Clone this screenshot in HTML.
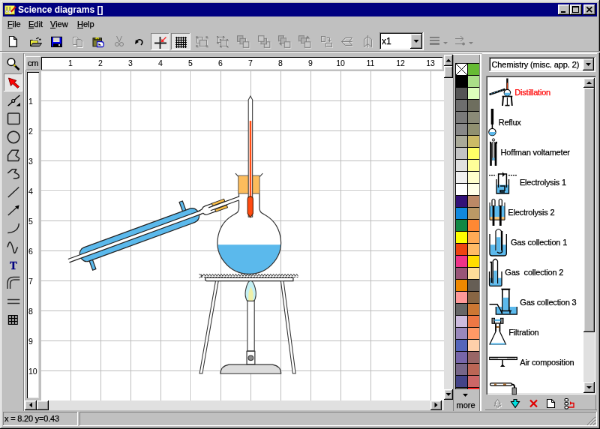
<!DOCTYPE html>
<html><head><meta charset="utf-8">
<style>
html,body{margin:0;padding:0;width:600px;height:429px;overflow:hidden;background:#c0c0c0;}
#w{will-change:transform;-webkit-font-smoothing:antialiased;position:absolute;left:0;top:0;width:800px;height:572px;transform:scale(0.75);transform-origin:0 0;background:#c0c0c0;
 font-family:"Liberation Sans",sans-serif;font-size:11px;color:#000;-webkit-text-stroke-width:0.25px;
 box-shadow:inset -1px -1px #000,inset 1px 1px #dfdfdf,inset -2px -2px #808080,inset 2px 2px #fff;}
.a{position:absolute;}
.rz{box-shadow:inset -1px -1px #000,inset 1px 1px #fff,inset -2px -2px #808080,inset 2px 2px #dfdfdf;background:#c0c0c0;}
.sk{box-shadow:inset -1px -1px #fff,inset 1px 1px #808080,inset -2px -2px #dfdfdf,inset 2px 2px #000;background:#fff;}
.th{box-shadow:inset -1px -1px #fff,inset 1px 1px #808080;}
.pr{box-shadow:inset -1px -1px #fff,inset 1px 1px #808080;background:#e6e6e6;}
.dith{background-color:#dfdfdf;}
svg{position:absolute;overflow:visible;}
</style></head>
<body>
<div id="w">
 <!-- title bar -->
 <div class="a" style="left:4px;top:4px;width:792px;height:18px;background:#000080;"></div>
 <div class="a" style="left:24px;top:5px;color:#fff;font-weight:bold;font-size:12px;line-height:16px;-webkit-text-stroke-width:0;">Science diagrams []</div>
 <div class="a rz" style="left:744px;top:6px;width:16px;height:14px;"></div>
 <div class="a rz" style="left:760px;top:6px;width:16px;height:14px;"></div>
 <div class="a rz" style="left:778px;top:6px;width:16px;height:14px;"></div>
 <!-- menu -->
 <div class="a" style="left:10px;top:26px;line-height:13px;"><u>F</u>ile</div>
 <div class="a" style="left:38px;top:26px;line-height:13px;"><u>E</u>dit</div>
 <div class="a" style="left:67px;top:26px;line-height:13px;"><u>V</u>iew</div>
 <div class="a" style="left:103px;top:26px;line-height:13px;"><u>H</u>elp</div>


 <div class="a pr" style="left:201px;top:44px;width:25px;height:23px;"></div>
 <div class="a pr" style="left:228px;top:44px;width:26px;height:23px;"></div>
 <!-- title icon -->
 <svg class="a" style="left:0;top:0" width="30" height="24">
  <rect x="6.5" y="7.5" width="13" height="12" fill="#fafa50"/>
  <path d="M6.5,19.3 H19.5" stroke="#202000" stroke-width="1"/>
  <path d="M9.2,9 V15.5 M13.2,9 V15.5" stroke="#707070" stroke-width="1.3"/>
  <circle cx="9.2" cy="15.2" r="1.5" fill="#f0f0f0" stroke="#808080" stroke-width="0.6"/>
  <circle cx="13.2" cy="15.2" r="1.5" fill="#f0f0f0" stroke="#808080" stroke-width="0.6"/>
  <path d="M21,9 L14.5,16" stroke="#d01010" stroke-width="2"/>
  <path d="M14.7,15.8 L12.7,18" stroke="#e8e8f0" stroke-width="2"/>
 </svg>
 <!-- title buttons glyphs -->
 <svg class="a" style="left:744px;top:6px" width="50" height="14">
  <rect x="4" y="9" width="6" height="2" fill="#000"/>
  <rect x="19.5" y="2.5" width="8" height="8" fill="none" stroke="#000"/>
  <rect x="19" y="2" width="9" height="2" fill="#000"/>
  <path d="M38.3,3.3 L45.2,10.2 M45.2,3.3 L38.3,10.2" stroke="#000" stroke-width="1.7"/>
 </svg>
 <!-- toolbar icons -->
 <svg class="a" style="left:0;top:0" width="800" height="80">
  <!-- new -->
  <g transform="translate(10,48)">
   <path d="M2.5,0.5 H8.5 L12.5,4.5 V14.5 H2.5 Z" fill="#fff" stroke="#111" stroke-width="1.1"/>
   <path d="M3,13.5 H12 M11.5,5 V13.5" stroke="#909090" stroke-width="1"/>
   <path d="M8.5,0.8 V4.5 H12.2 Z" fill="#808080" stroke="#111" stroke-width="1"/>
  </g>
  <!-- open -->
  <g transform="translate(40,47)">
   <path d="M0.5,14.5 V6.5 H3.5 L4.5,7.5 H10.5 V10.5" fill="#f0f040" stroke="#000" stroke-width="1"/>
   <rect x="1" y="7.5" width="9.3" height="7" fill="#f0f040"/>
   <path d="M1,14.6 L3.6,10.5 H15.5 L12.7,14.6 Z" fill="#808080" stroke="#000" stroke-width="1"/>
   <path d="M8.3,5 Q9.8,3 11.8,3.8" fill="none" stroke="#000" stroke-width="1.1"/>
   <circle cx="13.4" cy="5.6" r="1.2" fill="#000"/>
  </g>
  <!-- save -->
  <g transform="translate(67,47)">
   <rect x="1.5" y="2.3" width="14" height="13.2" fill="#0000f0" stroke="#000" stroke-width="1"/>
   <rect x="4" y="3.2" width="8.5" height="5.8" fill="#e4e4d8"/>
   <path d="M4.5,5 H12 M4.5,7 H12" stroke="#b0b0a8" stroke-width="0.5"/>
   <rect x="4" y="11.3" width="10.5" height="4" fill="#000"/>
   <rect x="11.2" y="12" width="1.6" height="2.2" fill="#fff"/>
  </g>
  <!-- copy disabled -->
  <g transform="translate(96,47)" fill="none">
   <path d="M1.5,2.5 H6.5 L8.5,4.5 V12.5 H1.5 Z" stroke="#fff" transform="translate(1,1)"/>
   <path d="M6.5,5.5 H11.5 L13.5,7.5 V15.5 H6.5 Z" stroke="#fff" transform="translate(1,1)"/>
   <path d="M1.5,2.5 H6.5 L8.5,4.5 V12.5 H1.5 Z" stroke="#808080"/>
   <path d="M6.5,5.5 H11.5 L13.5,7.5 V15.5 H6.5 Z" stroke="#808080" fill="#c0c0c0"/>
  </g>
  <!-- paste -->
  <g transform="translate(123,47)">
   <rect x="1" y="3.8" width="11.5" height="11" fill="#7c7c30" stroke="#111" stroke-width="1"/>
   <rect x="2" y="4.5" width="9.5" height="2.2" fill="#2a2a10"/>
   <rect x="4.5" y="3.2" width="1.4" height="2" fill="#f0f000"/>
   <rect x="7.3" y="3.2" width="1.4" height="2" fill="#f0f000"/>
   <rect x="6" y="2.8" width="1.2" height="1.2" fill="#f0f000"/>
   <path d="M6.5,8.5 H12 Q14.5,8.5 15.2,11 V14 Q15,15.5 13.5,15.5 H6.5 Z" fill="#fff" stroke="#1010c0" stroke-width="1.3"/>
   <path d="M8.3,10.8 V13.3 H12" stroke="#808080" stroke-width="0.7"/>
  </g>
  <!-- cut disabled -->
  <g transform="translate(151,47)" fill="none">
   <path d="M4.5,1 L8,9 M11.5,1 L8,9" stroke="#808080" stroke-width="1"/>
   <circle cx="5" cy="12" r="2.5" stroke="#808080"/>
   <circle cx="11" cy="12" r="2.5" stroke="#808080"/>
  </g>
  <!-- undo -->
  <g transform="translate(178,47)">
   <path d="M4,8 Q8,4 11,7 Q13,10 10,13" fill="none" stroke="#000" stroke-width="1.6"/>
   <path d="M2,12 L3,6 L7,9 Z" fill="#000"/>
  </g>
  <!-- cross toggle -->
  <g transform="translate(205,49)">
   <path d="M8.5,0 V16 M1,8.5 H17" stroke="#202020" stroke-width="1.8"/>
   <path d="M16.5,0.5 L12,5" stroke="#ff2020" stroke-width="1.3"/>
   <path d="M9.8,7.2 L10.6,2.8 L14.2,6.4 Z" fill="#ff2020"/>
  </g>
  <!-- grid toggle -->
  <g transform="translate(234,49)" stroke="#000" stroke-width="1.2">
   <path d="M1.5,0 V15 M4.5,0 V15 M7.5,0 V15 M10.5,0 V15 M13.5,0 V15 M0,1.5 H15 M0,4.5 H15 M0,7.5 H15 M0,10.5 H15 M0,13.5 H15"/>
  </g>
 </svg>

 <!-- disabled arrange icons -->
 <svg class="a" style="left:0;top:0" width="800" height="80" fill="none">
  
  <g stroke="#fff" transform="translate(1,1)" opacity="0.45">
   <g transform="translate(261,47)">
    <rect x="1.5" y="2.5" width="7.5" height="8"/>
    <rect x="5.5" y="6.5" width="9" height="8" fill="#c0c0c0"/>
    <rect x="0.2" y="1.3" width="2.4" height="2.4" fill="#808080" stroke="none"/>
    <rect x="13.4" y="1.3" width="2.4" height="2.4" fill="#808080" stroke="none"/>
    <rect x="0.2" y="13.2" width="2.4" height="2.4" fill="#808080" stroke="none"/>
    <rect x="13.4" y="13.2" width="2.4" height="2.4" fill="#808080" stroke="none"/>
   </g>
   <g transform="translate(288,47)">
    <rect x="2.5" y="2.5" width="7" height="7"/>
    <rect x="6.5" y="6.5" width="8" height="8" fill="#c0c0c0"/>
    <rect x="1" y="1" width="2" height="2" fill="#808080" stroke="none"/>
    <rect x="9" y="1" width="2" height="2" fill="#808080" stroke="none"/>
    <rect x="1" y="9" width="2" height="2" fill="#808080" stroke="none"/>
    <rect x="5" y="5" width="2" height="2" fill="#808080" stroke="none"/>
    <rect x="14" y="5" width="2" height="2" fill="#808080" stroke="none"/>
    <rect x="5" y="14" width="2" height="2" fill="#808080" stroke="none"/>
    <rect x="14" y="14" width="2" height="2" fill="#808080" stroke="none"/>
   </g>
   <g transform="translate(316,47)">
    <rect x="0.5" y="0.8" width="7.5" height="7.5" fill="#b0b0b0"/>
    <rect x="4" y="4.3" width="7.5" height="7.5" fill="#b0b0b0"/>
    <rect x="8.3" y="8.8" width="7.5" height="7.5" fill="#c8c8c8"/>
   </g>
   <g transform="translate(344,47)">
    <rect x="8.3" y="8.8" width="7.5" height="7.5" fill="#c8c8c8"/>
    <rect x="4" y="4.3" width="7.5" height="7.5" fill="#b0b0b0"/>
    <rect x="0.5" y="0.8" width="7.5" height="7.5" fill="#c8c8c8"/>
   </g>
   <g transform="translate(371,47)">
    <rect x="0.5" y="0.8" width="7" height="7" fill="#b0b0b0"/>
    <rect x="3.5" y="3.8" width="7" height="7" fill="#b0b0b0"/>
    <path d="M1,11 L4,8.5 V13.5 Z" fill="#808080" stroke="none"/>
    <rect x="8.3" y="8.8" width="7.5" height="7.5" fill="#c8c8c8"/>
   </g>
   <g transform="translate(398,47)">
    <rect x="0.5" y="0.8" width="7" height="7" fill="#b0b0b0"/>
    <rect x="3.5" y="3.8" width="7" height="7" fill="#b0b0b0"/>
    <path d="M12,0.5 L14.5,4 H9.5 Z" fill="#808080" stroke="none"/>
    <rect x="8.3" y="8.8" width="7.5" height="7.5" fill="#c8c8c8"/>
   </g>
   <g transform="translate(427,47)">
    <rect x="1.5" y="1.5" width="5" height="7"/>
    <rect x="7.5" y="10.5" width="8" height="5"/>
    <path d="M8.5,3.5 H12.5 V8.5 M10.5,6.5 L12.5,8.5 L14.5,6.5"/>
   </g>
   <g transform="translate(454,47)">
    <path d="M1.5,8.5 L6.5,3.5 H15.5 L11.5,8.5 Z M1.5,8.5 L6.5,13.5 H15.5 L11.5,8.5 M1.5,8.5 H15.5"/>
   </g>
   <g transform="translate(482,47)">
    <path d="M8.5,1.5 L3.5,5.5 V15.5 L8.5,11.5 Z M8.5,1.5 L13.5,5.5 V15.5 L8.5,11.5 M8.5,0 V16"/>
   </g>
  </g>
  <g stroke="#808080">
   <g transform="translate(261,47)">
    <rect x="1.5" y="2.5" width="7.5" height="8"/>
    <rect x="5.5" y="6.5" width="9" height="8" fill="#c0c0c0"/>
    <rect x="0.2" y="1.3" width="2.4" height="2.4" fill="#808080" stroke="none"/>
    <rect x="13.4" y="1.3" width="2.4" height="2.4" fill="#808080" stroke="none"/>
    <rect x="0.2" y="13.2" width="2.4" height="2.4" fill="#808080" stroke="none"/>
    <rect x="13.4" y="13.2" width="2.4" height="2.4" fill="#808080" stroke="none"/>
   </g>
   <g transform="translate(288,47)">
    <rect x="2.5" y="2.5" width="7" height="7"/>
    <rect x="6.5" y="6.5" width="8" height="8" fill="#c0c0c0"/>
    <rect x="1" y="1" width="2" height="2" fill="#808080" stroke="none"/>
    <rect x="9" y="1" width="2" height="2" fill="#808080" stroke="none"/>
    <rect x="1" y="9" width="2" height="2" fill="#808080" stroke="none"/>
    <rect x="5" y="5" width="2" height="2" fill="#808080" stroke="none"/>
    <rect x="14" y="5" width="2" height="2" fill="#808080" stroke="none"/>
    <rect x="5" y="14" width="2" height="2" fill="#808080" stroke="none"/>
    <rect x="14" y="14" width="2" height="2" fill="#808080" stroke="none"/>
   </g>
   <g transform="translate(316,47)">
    <rect x="0.5" y="0.8" width="7.5" height="7.5" fill="#b0b0b0"/>
    <rect x="4" y="4.3" width="7.5" height="7.5" fill="#b0b0b0"/>
    <rect x="8.3" y="8.8" width="7.5" height="7.5" fill="#c8c8c8"/>
   </g>
   <g transform="translate(344,47)">
    <rect x="8.3" y="8.8" width="7.5" height="7.5" fill="#c8c8c8"/>
    <rect x="4" y="4.3" width="7.5" height="7.5" fill="#b0b0b0"/>
    <rect x="0.5" y="0.8" width="7.5" height="7.5" fill="#c8c8c8"/>
   </g>
   <g transform="translate(371,47)">
    <rect x="0.5" y="0.8" width="7" height="7" fill="#b0b0b0"/>
    <rect x="3.5" y="3.8" width="7" height="7" fill="#b0b0b0"/>
    <path d="M1,11 L4,8.5 V13.5 Z" fill="#808080" stroke="none"/>
    <rect x="8.3" y="8.8" width="7.5" height="7.5" fill="#c8c8c8"/>
   </g>
   <g transform="translate(398,47)">
    <rect x="0.5" y="0.8" width="7" height="7" fill="#b0b0b0"/>
    <rect x="3.5" y="3.8" width="7" height="7" fill="#b0b0b0"/>
    <path d="M12,0.5 L14.5,4 H9.5 Z" fill="#808080" stroke="none"/>
    <rect x="8.3" y="8.8" width="7.5" height="7.5" fill="#c8c8c8"/>
   </g>
   <g transform="translate(427,47)">
    <rect x="1.5" y="1.5" width="5" height="7"/>
    <rect x="7.5" y="10.5" width="8" height="5"/>
    <path d="M8.5,3.5 H12.5 V8.5 M10.5,6.5 L12.5,8.5 L14.5,6.5"/>
   </g>
   <g transform="translate(454,47)">
    <path d="M1.5,8.5 L6.5,3.5 H15.5 L11.5,8.5 Z M1.5,8.5 L6.5,13.5 H15.5 L11.5,8.5 M1.5,8.5 H15.5"/>
   </g>
   <g transform="translate(482,47)">
    <path d="M8.5,1.5 L3.5,5.5 V15.5 L8.5,11.5 Z M8.5,1.5 L13.5,5.5 V15.5 L8.5,11.5 M8.5,0 V16"/>
   </g>
  </g>
  <!-- line style icon -->
  <g fill="#808080">
   <rect x="573" y="49" width="13" height="2"/>
   <rect x="573" y="53" width="13" height="2"/>
   <rect x="573" y="57" width="13" height="3"/>
   <path d="M591,56 H597 L594,59 Z"/>
   <path d="M625,56 H631 L628,59 Z"/>
  </g>
  <g stroke="#808080">
   <path d="M607,51.5 H617 M607,58.5 H617 M614,48 L618,51.5 L614,55"/>
   <circle cx="618" cy="58.5" r="1.5" fill="#808080"/>
  </g>
 </svg>
 <!-- combo x1 -->
 <div class="a sk" style="left:506px;top:43px;width:59px;height:24px;"></div>
 <div class="a" style="left:509px;top:48px;font-size:12px;line-height:14px;">x1</div>
 <div class="a rz" style="left:547px;top:45px;width:16px;height:20px;"></div>
 <svg class="a" style="left:547px;top:45px" width="16" height="20"><path d="M4.5,8 H11.5 L8,12 Z" fill="#000"/></svg>
 <!-- toolbar separator -->
 <div class="a" style="left:0;top:68px;width:800px;height:1px;background:#808080;"></div>
 <div class="a" style="left:0;top:69px;width:800px;height:1px;background:#fff;"></div>

<div class="a" style="left:31px;top:71px;width:1px;height:477px;background:#808080;"></div>
<div class="a" style="left:32px;top:72px;width:1px;height:476px;background:#fff;"></div>

<div class="a" style="left:604px;top:72px;width:1px;height:476px;background:#808080;"></div>
<div class="a" style="left:34px;top:75px;width:20px;height:18px;background:#c0c0c0;box-shadow:inset 1px 1px #fff,inset -1px -1px #a0a0a0;"></div>
<div class="a" style="left:34.5px;top:77px;width:19px;text-align:center;font-size:11.5px;line-height:14px;letter-spacing:-0.3px;-webkit-text-stroke:0.2px #000;">cm</div>
<div class="a" style="left:55px;top:76px;width:535px;height:17px;background:#fff;box-shadow:inset 1px 1px #000,inset -1px -1px #dfdfdf;"></div>
<div class="a" style="left:55px;top:95px;width:537px;height:439px;background:#fff;overflow:hidden;" id="cv"></div>
<div class="a" style="left:36px;top:96px;width:16px;height:435px;background:#fff;box-shadow:inset 1px 1px #000,inset -1px -1px #dfdfdf;"></div>
<div class="a" style="left:94px;top:95px;width:1px;height:439px;background:#bcbcbc;"></div>
<div class="a" style="left:134px;top:95px;width:1px;height:439px;background:#bcbcbc;"></div>
<div class="a" style="left:174px;top:95px;width:1px;height:439px;background:#bcbcbc;"></div>
<div class="a" style="left:214px;top:95px;width:1px;height:439px;background:#bcbcbc;"></div>
<div class="a" style="left:254px;top:95px;width:1px;height:439px;background:#bcbcbc;"></div>
<div class="a" style="left:294px;top:95px;width:1px;height:439px;background:#bcbcbc;"></div>
<div class="a" style="left:334px;top:95px;width:1px;height:439px;background:#bcbcbc;"></div>
<div class="a" style="left:374px;top:95px;width:1px;height:439px;background:#bcbcbc;"></div>
<div class="a" style="left:414px;top:95px;width:1px;height:439px;background:#bcbcbc;"></div>
<div class="a" style="left:454px;top:95px;width:1px;height:439px;background:#bcbcbc;"></div>
<div class="a" style="left:494px;top:95px;width:1px;height:439px;background:#bcbcbc;"></div>
<div class="a" style="left:534px;top:95px;width:1px;height:439px;background:#bcbcbc;"></div>
<div class="a" style="left:574px;top:95px;width:1px;height:439px;background:#bcbcbc;"></div>
<div class="a" style="left:55px;top:134px;width:537px;height:1px;background:#bcbcbc;"></div>
<div class="a" style="left:55px;top:174px;width:537px;height:1px;background:#bcbcbc;"></div>
<div class="a" style="left:55px;top:214px;width:537px;height:1px;background:#bcbcbc;"></div>
<div class="a" style="left:55px;top:254px;width:537px;height:1px;background:#bcbcbc;"></div>
<div class="a" style="left:55px;top:294px;width:537px;height:1px;background:#bcbcbc;"></div>
<div class="a" style="left:55px;top:334px;width:537px;height:1px;background:#bcbcbc;"></div>
<div class="a" style="left:55px;top:374px;width:537px;height:1px;background:#bcbcbc;"></div>
<div class="a" style="left:55px;top:414px;width:537px;height:1px;background:#bcbcbc;"></div>
<div class="a" style="left:55px;top:454px;width:537px;height:1px;background:#bcbcbc;"></div>
<div class="a" style="left:55px;top:494px;width:537px;height:1px;background:#bcbcbc;"></div>
<div class="a" style="left:79px;top:77.5px;width:30px;text-align:center;font-size:10.5px;-webkit-text-stroke:0.05px #000;line-height:13px;">1</div>
<div class="a" style="left:119px;top:77.5px;width:30px;text-align:center;font-size:10.5px;-webkit-text-stroke:0.05px #000;line-height:13px;">2</div>
<div class="a" style="left:159px;top:77.5px;width:30px;text-align:center;font-size:10.5px;-webkit-text-stroke:0.05px #000;line-height:13px;">3</div>
<div class="a" style="left:199px;top:77.5px;width:30px;text-align:center;font-size:10.5px;-webkit-text-stroke:0.05px #000;line-height:13px;">4</div>
<div class="a" style="left:239px;top:77.5px;width:30px;text-align:center;font-size:10.5px;-webkit-text-stroke:0.05px #000;line-height:13px;">5</div>
<div class="a" style="left:279px;top:77.5px;width:30px;text-align:center;font-size:10.5px;-webkit-text-stroke:0.05px #000;line-height:13px;">6</div>
<div class="a" style="left:319px;top:77.5px;width:30px;text-align:center;font-size:10.5px;-webkit-text-stroke:0.05px #000;line-height:13px;">7</div>
<div class="a" style="left:359px;top:77.5px;width:30px;text-align:center;font-size:10.5px;-webkit-text-stroke:0.05px #000;line-height:13px;">8</div>
<div class="a" style="left:399px;top:77.5px;width:30px;text-align:center;font-size:10.5px;-webkit-text-stroke:0.05px #000;line-height:13px;">9</div>
<div class="a" style="left:439px;top:77.5px;width:30px;text-align:center;font-size:10.5px;-webkit-text-stroke:0.05px #000;line-height:13px;">10</div>
<div class="a" style="left:479px;top:77.5px;width:30px;text-align:center;font-size:10.5px;-webkit-text-stroke:0.05px #000;line-height:13px;">11</div>
<div class="a" style="left:519px;top:77.5px;width:30px;text-align:center;font-size:10.5px;-webkit-text-stroke:0.05px #000;line-height:13px;">12</div>
<div class="a" style="left:559px;top:77.5px;width:30px;text-align:center;font-size:10.5px;-webkit-text-stroke:0.05px #000;line-height:13px;">13</div>
<div class="a" style="left:38px;top:128.5px;font-size:10.5px;-webkit-text-stroke:0.05px #000;line-height:13px;">1</div>
<div class="a" style="left:38px;top:168.5px;font-size:10.5px;-webkit-text-stroke:0.05px #000;line-height:13px;">2</div>
<div class="a" style="left:38px;top:208.5px;font-size:10.5px;-webkit-text-stroke:0.05px #000;line-height:13px;">3</div>
<div class="a" style="left:38px;top:248.5px;font-size:10.5px;-webkit-text-stroke:0.05px #000;line-height:13px;">4</div>
<div class="a" style="left:38px;top:288.5px;font-size:10.5px;-webkit-text-stroke:0.05px #000;line-height:13px;">5</div>
<div class="a" style="left:38px;top:328.5px;font-size:10.5px;-webkit-text-stroke:0.05px #000;line-height:13px;">6</div>
<div class="a" style="left:38px;top:368.5px;font-size:10.5px;-webkit-text-stroke:0.05px #000;line-height:13px;">7</div>
<div class="a" style="left:38px;top:408.5px;font-size:10.5px;-webkit-text-stroke:0.05px #000;line-height:13px;">8</div>
<div class="a" style="left:38px;top:448.5px;font-size:10.5px;-webkit-text-stroke:0.05px #000;line-height:13px;">9</div>
<div class="a" style="left:38px;top:488.5px;font-size:10.5px;-webkit-text-stroke:0.05px #000;line-height:13px;">10</div>
<div class="a" style="left:592px;top:73px;width:12px;height:474px;background:#e0e0e0;"></div>
<div class="a rz" style="left:592px;top:73px;width:12px;height:15px;"></div>
<svg class="a" style="left:592px;top:73px" width="12" height="15"><path d="M2.5,9.5 H9.5 L6,5.5 Z" fill="#000"/></svg>
<div class="a rz" style="left:592px;top:88px;width:12px;height:16px;"></div>
<div class="a rz" style="left:592px;top:519px;width:12px;height:14px;"></div>
<svg class="a" style="left:592px;top:519px" width="12" height="14"><path d="M2.5,5 H9.5 L6,9 Z" fill="#000"/></svg>
<div class="a" style="left:592px;top:533px;width:12px;height:14px;background:#c0c0c0;"></div>
<div class="a" style="left:33px;top:534px;width:559px;height:13px;background:#e0e0e0;"></div>
<div class="a rz" style="left:33px;top:534px;width:16px;height:13px;"></div>
<svg class="a" style="left:33px;top:534px" width="16" height="13"><path d="M10,2.5 V9.5 L6,6 Z" fill="#000"/></svg>
<div class="a rz" style="left:49px;top:534px;width:16px;height:13px;"></div>
<div class="a rz" style="left:574px;top:534px;width:15px;height:13px;"></div>
<svg class="a" style="left:574px;top:534px" width="15" height="13"><path d="M5.5,2.5 V9.5 L9.5,6 Z" fill="#000"/></svg>

<div class="a" style="left:607px;top:84px;width:33px;height:435px;overflow:hidden;">
<div class="a" style="left:0;top:0px;width:16px;height:16px;background:#ffffff;box-shadow:inset 1px 1px #000;"></div>
<div class="a" style="left:16px;top:0px;width:17px;height:16px;background:#66bb33;box-shadow:inset 1px 1px #000,inset -1px 0 #000;"></div>
<div class="a" style="left:0;top:16px;width:16px;height:16px;background:#000000;box-shadow:inset 1px 1px #000;"></div>
<div class="a" style="left:16px;top:16px;width:17px;height:16px;background:#aade88;box-shadow:inset 1px 1px #000,inset -1px 0 #000;"></div>
<div class="a" style="left:0;top:32px;width:16px;height:16px;background:#555555;box-shadow:inset 1px 1px #000;"></div>
<div class="a" style="left:16px;top:32px;width:17px;height:16px;background:#ddffbb;box-shadow:inset 1px 1px #000,inset -1px 0 #000;"></div>
<div class="a" style="left:0;top:48px;width:16px;height:16px;background:#6e6e6e;box-shadow:inset 1px 1px #000;"></div>
<div class="a" style="left:16px;top:48px;width:17px;height:16px;background:#6e6e5e;box-shadow:inset 1px 1px #000,inset -1px 0 #000;"></div>
<div class="a" style="left:0;top:64px;width:16px;height:16px;background:#7a7a7a;box-shadow:inset 1px 1px #000;"></div>
<div class="a" style="left:16px;top:64px;width:17px;height:16px;background:#8a8a77;box-shadow:inset 1px 1px #000,inset -1px 0 #000;"></div>
<div class="a" style="left:0;top:80px;width:16px;height:16px;background:#888888;box-shadow:inset 1px 1px #000;"></div>
<div class="a" style="left:16px;top:80px;width:17px;height:16px;background:#909070;box-shadow:inset 1px 1px #000,inset -1px 0 #000;"></div>
<div class="a" style="left:0;top:96px;width:16px;height:16px;background:#aaaa99;box-shadow:inset 1px 1px #000;"></div>
<div class="a" style="left:16px;top:96px;width:17px;height:16px;background:#ccbb66;box-shadow:inset 1px 1px #000,inset -1px 0 #000;"></div>
<div class="a" style="left:0;top:112px;width:16px;height:16px;background:#c4c4c4;box-shadow:inset 1px 1px #000;"></div>
<div class="a" style="left:16px;top:112px;width:17px;height:16px;background:#ffff66;box-shadow:inset 1px 1px #000,inset -1px 0 #000;"></div>
<div class="a" style="left:0;top:128px;width:16px;height:16px;background:#e0e0e0;box-shadow:inset 1px 1px #000;"></div>
<div class="a" style="left:16px;top:128px;width:17px;height:16px;background:#ffff99;box-shadow:inset 1px 1px #000,inset -1px 0 #000;"></div>
<div class="a" style="left:0;top:144px;width:16px;height:16px;background:#f0f0f0;box-shadow:inset 1px 1px #000;"></div>
<div class="a" style="left:16px;top:144px;width:17px;height:16px;background:#ffffcc;box-shadow:inset 1px 1px #000,inset -1px 0 #000;"></div>
<div class="a" style="left:0;top:160px;width:16px;height:16px;background:#ffffff;box-shadow:inset 1px 1px #000;"></div>
<div class="a" style="left:16px;top:160px;width:17px;height:16px;background:#ffffe8;box-shadow:inset 1px 1px #000,inset -1px 0 #000;"></div>
<div class="a" style="left:0;top:176px;width:16px;height:16px;background:#331177;box-shadow:inset 1px 1px #000;"></div>
<div class="a" style="left:16px;top:176px;width:17px;height:16px;background:#bb8866;box-shadow:inset 1px 1px #000,inset -1px 0 #000;"></div>
<div class="a" style="left:0;top:192px;width:16px;height:16px;background:#1188dd;box-shadow:inset 1px 1px #000;"></div>
<div class="a" style="left:16px;top:192px;width:17px;height:16px;background:#bb9966;box-shadow:inset 1px 1px #000,inset -1px 0 #000;"></div>
<div class="a" style="left:0;top:208px;width:16px;height:16px;background:#118844;box-shadow:inset 1px 1px #000;"></div>
<div class="a" style="left:16px;top:208px;width:17px;height:16px;background:#ff8833;box-shadow:inset 1px 1px #000,inset -1px 0 #000;"></div>
<div class="a" style="left:0;top:224px;width:16px;height:16px;background:#ffff00;box-shadow:inset 1px 1px #000;"></div>
<div class="a" style="left:16px;top:224px;width:17px;height:16px;background:#ffaa55;box-shadow:inset 1px 1px #000,inset -1px 0 #000;"></div>
<div class="a" style="left:0;top:240px;width:16px;height:16px;background:#ee4411;box-shadow:inset 1px 1px #000;"></div>
<div class="a" style="left:16px;top:240px;width:17px;height:16px;background:#ffbb66;box-shadow:inset 1px 1px #000,inset -1px 0 #000;"></div>
<div class="a" style="left:0;top:256px;width:16px;height:16px;background:#ee3388;box-shadow:inset 1px 1px #000;"></div>
<div class="a" style="left:16px;top:256px;width:17px;height:16px;background:#ffdd00;box-shadow:inset 1px 1px #000,inset -1px 0 #000;"></div>
<div class="a" style="left:0;top:272px;width:16px;height:16px;background:#995577;box-shadow:inset 1px 1px #000;"></div>
<div class="a" style="left:16px;top:272px;width:17px;height:16px;background:#ffdd99;box-shadow:inset 1px 1px #000,inset -1px 0 #000;"></div>
<div class="a" style="left:0;top:288px;width:16px;height:16px;background:#ee8800;box-shadow:inset 1px 1px #000;"></div>
<div class="a" style="left:16px;top:288px;width:17px;height:16px;background:#665e55;box-shadow:inset 1px 1px #000,inset -1px 0 #000;"></div>
<div class="a" style="left:0;top:304px;width:16px;height:16px;background:#ff9999;box-shadow:inset 1px 1px #000;"></div>
<div class="a" style="left:16px;top:304px;width:17px;height:16px;background:#886644;box-shadow:inset 1px 1px #000,inset -1px 0 #000;"></div>
<div class="a" style="left:0;top:320px;width:16px;height:16px;background:#666666;box-shadow:inset 1px 1px #000;"></div>
<div class="a" style="left:16px;top:320px;width:17px;height:16px;background:#cc7733;box-shadow:inset 1px 1px #000,inset -1px 0 #000;"></div>
<div class="a" style="left:0;top:336px;width:16px;height:16px;background:#ccbbdd;box-shadow:inset 1px 1px #000;"></div>
<div class="a" style="left:16px;top:336px;width:17px;height:16px;background:#ee7744;box-shadow:inset 1px 1px #000,inset -1px 0 #000;"></div>
<div class="a" style="left:0;top:352px;width:16px;height:16px;background:#9988bb;box-shadow:inset 1px 1px #000;"></div>
<div class="a" style="left:16px;top:352px;width:17px;height:16px;background:#ff9966;box-shadow:inset 1px 1px #000,inset -1px 0 #000;"></div>
<div class="a" style="left:0;top:368px;width:16px;height:16px;background:#5566bb;box-shadow:inset 1px 1px #000;"></div>
<div class="a" style="left:16px;top:368px;width:17px;height:16px;background:#ffd0aa;box-shadow:inset 1px 1px #000,inset -1px 0 #000;"></div>
<div class="a" style="left:0;top:384px;width:16px;height:16px;background:#7766aa;box-shadow:inset 1px 1px #000;"></div>
<div class="a" style="left:16px;top:384px;width:17px;height:16px;background:#996666;box-shadow:inset 1px 1px #000,inset -1px 0 #000;"></div>
<div class="a" style="left:0;top:400px;width:16px;height:16px;background:#776688;box-shadow:inset 1px 1px #000;"></div>
<div class="a" style="left:16px;top:400px;width:17px;height:16px;background:#bb6655;box-shadow:inset 1px 1px #000,inset -1px 0 #000;"></div>
<div class="a" style="left:0;top:416px;width:16px;height:16px;background:#444488;box-shadow:inset 1px 1px #000;"></div>
<div class="a" style="left:16px;top:416px;width:17px;height:16px;background:#cc6666;box-shadow:inset 1px 1px #000,inset -1px 0 #000;"></div>
<div class="a" style="left:0;top:432px;width:16px;height:16px;background:#555555;box-shadow:inset 1px 1px #000;"></div>
<div class="a" style="left:16px;top:432px;width:17px;height:16px;background:#ff2222;box-shadow:inset 1px 1px #000,inset -1px 0 #000;"></div>
</div>
<svg class="a" style="left:607px;top:84px" width="16" height="16"><path d="M1,1 L16,16 M16,1 L1,16" stroke="#000" stroke-width="1"/></svg>
<svg class="a" style="left:616px;top:524px" width="10" height="6"><path d="M1,1 H8 L4.5,5 Z" fill="#000"/></svg>
<div class="a" style="left:603px;top:534px;width:36px;text-align:center;font-size:11px;line-height:13px;">more</div>
<div class="a" style="left:639px;top:72px;width:1px;height:476px;background:#808080;"></div>
<div class="a" style="left:640px;top:72px;width:2px;height:476px;background:#fff;"></div>


<div class="a" style="left:643px;top:71px;width:153px;height:1px;background:#fff;"></div>
<div class="a" style="left:604px;top:72px;width:36px;height:1px;background:#fff;"></div>
<div class="a sk" style="left:652px;top:76px;width:142px;height:20px;"></div>
<div class="a" style="left:655.5px;top:80px;font-size:11px;line-height:13px;white-space:nowrap;letter-spacing:-0.1px;">Chemistry (misc. app. 2)</div>
<div class="a rz" style="left:777px;top:78px;width:15px;height:16px;"></div>
<svg class="a" style="left:777px;top:78px" width="15" height="16"><path d="M4,6 H11 L7.5,10 Z" fill="#000"/></svg>
<div class="a" style="left:648px;top:101px;width:146px;height:425px;background:#fff;box-shadow:inset 1px 1px #808080,inset 2px 2px #404040,inset -1px -1px #fff,inset -2px -2px #dfdfdf;"></div>
<div class="a" style="left:778px;top:104px;width:15px;height:420px;background:#e0e0e0;"></div>
<div class="a rz" style="left:778px;top:104px;width:15px;height:13px;"></div>
<svg class="a" style="left:778px;top:104px" width="15" height="13"><path d="M4,8 H11 L7.5,4.5 Z" fill="#000"/></svg>
<div class="a rz" style="left:778px;top:117px;width:15px;height:326px;"></div>
<div class="a rz" style="left:778px;top:509px;width:15px;height:15px;"></div>
<svg class="a" style="left:778px;top:509px" width="15" height="15"><path d="M4,6 H11 L7.5,9.5 Z" fill="#000"/></svg>
<div class="a" style="left:686.3px;top:116.7px;font-size:11px;line-height:13px;white-space:nowrap;letter-spacing:-0.2px;color:#ff0000;">Distillation</div>
<div class="a" style="left:664.7px;top:156.7px;font-size:11px;line-height:13px;white-space:nowrap;letter-spacing:-0.2px;color:#000;">Reflux</div>
<div class="a" style="left:667.6px;top:196.7px;font-size:11px;line-height:13px;white-space:nowrap;letter-spacing:-0.2px;color:#000;">Hoffman voltameter</div>
<div class="a" style="left:692.9px;top:236.7px;font-size:11px;line-height:13px;white-space:nowrap;letter-spacing:-0.2px;color:#000;">Electrolysis 1</div>
<div class="a" style="left:677.3px;top:276.7px;font-size:11px;line-height:13px;white-space:nowrap;letter-spacing:-0.2px;color:#000;">Electrolysis 2</div>
<div class="a" style="left:681px;top:316.7px;font-size:11px;line-height:13px;white-space:nowrap;letter-spacing:-0.2px;color:#000;">Gas collection 1</div>
<div class="a" style="left:673.3px;top:356.7px;font-size:11px;line-height:13px;white-space:nowrap;letter-spacing:-0.2px;color:#000;">Gas&nbsp;&nbsp;collection 2</div>
<div class="a" style="left:693.3px;top:396.7px;font-size:11px;line-height:13px;white-space:nowrap;letter-spacing:-0.2px;color:#000;">Gas collection 3</div>
<div class="a" style="left:678.3px;top:436.7px;font-size:11px;line-height:13px;white-space:nowrap;letter-spacing:-0.2px;color:#000;">Filtration</div>
<div class="a" style="left:693.3px;top:476.7px;font-size:11px;line-height:13px;white-space:nowrap;letter-spacing:-0.2px;color:#000;">Air composition</div>
<svg class="a" style="left:0;top:0" width="800" height="526" fill="none" stroke="#000">
 <!-- distillation -->
 <path d="M676.4,104.5 V119" stroke="#000" stroke-width="2.4"/>
 <path d="M676.4,110.5 V119" stroke="#e04010" stroke-width="1.1"/>
 <path d="M652.5,126 L673.5,119" stroke="#000" stroke-width="2.6"/>
 <path d="M654.5,125.2 L671,119.8" stroke="#5bb9ec" stroke-width="0.9" stroke-dasharray="2,2"/>
 <circle cx="676.4" cy="123.6" r="4.2" fill="#fff" stroke-width="1.2"/>
 <path d="M672.3,123.8 A4.1,4.1 0 0 0 680.5,123.8 Z" fill="#5bb9ec" stroke="none"/>
 <path d="M669.5,128.5 H683.3" stroke-width="1.6"/>
 <path d="M671,129 L670,141 M681.8,129 L682.8,141" stroke-width="1.9"/>
 <path d="M676.4,130 V140" stroke-width="1.1"/>
 <path d="M673.5,140.6 H679.5" stroke-width="1.6"/>
 <!-- reflux -->
 <path d="M656.4,145 V166" stroke-width="3.4"/>
 <path d="M656.4,166 V171" stroke-width="1.5"/>
 <circle cx="656.4" cy="176" r="4.6" fill="#fff" stroke-width="1.3"/>
 <path d="M651.9,176 A4.5,4.5 0 0 0 660.9,176 Z" fill="#5bb9ec" stroke="none"/>
 <!-- hoffman -->
 <path d="M653,190 Q654.5,190 654.5,192 V221 M663,190 Q661,190 661,192 V221" stroke-width="2.6"/>
 <path d="M656.8,189 V214 M659.2,189 V214" stroke-width="1"/>
 <circle cx="658" cy="186.5" r="1.6" stroke-width="1"/>
 <path d="M656.5,212 H659.5" stroke="#5bb9ec" stroke-width="3"/>
 <!-- electrolysis 1 -->
 <path d="M652,233.7 H661.3 M677.9,233.7 H689.7" stroke-width="1.2" stroke-dasharray="2,1"/>
 <rect x="662.2" y="246.5" width="16" height="11.5" fill="#5bb9ec" stroke="none"/>
 <path d="M662,239 V258 H678.5 V239" stroke-width="1.3"/>
 <path d="M664.6,250 V232 H675.4 V250" stroke-width="1.5"/>
 <path d="M670,229 L673,233 L670,236 Z" fill="#000" stroke="none"/>
 <path d="M667,248 H673 V254 H667 V256 H673" stroke-width="1.5"/>
 <!-- electrolysis 2 -->
 <rect x="653" y="274.7" width="20" height="14.6" fill="#5bb9ec" stroke="none"/>
 <rect x="653" y="289.3" width="20" height="4" fill="#f8c070" stroke="none"/>
 <path d="M653,270 V293.2 H673 V270" stroke-width="1"/>
 <path d="M656,275 V267 Q658,264 660,267 V275 M665.3,275 V267 Q667.3,264 669.3,267 V275" fill="#fff" stroke-width="1.2"/>
 <path d="M658,274 V301 M667.3,274 V301" stroke-width="2.8"/>
 <!-- gas collection 1 -->
 <rect x="653.5" y="326.3" width="21.5" height="14.5" fill="#5bb9ec" stroke="none"/>
 <path d="M653,312 V338 Q653,341 656,341 H672 Q675.3,341 675.3,338 V312" stroke-width="1.3"/>
 <path d="M661,334 V308 Q664.7,303 668.4,308 V334" fill="#fff" stroke-width="1.2"/>
 <rect x="662" y="316.3" width="5.5" height="18" fill="#5bb9ec" stroke="none"/>
 <path d="M669.5,308 V336 Q666,339 663,336" stroke-width="1.5"/>
 <!-- gas collection 2 -->
 <rect x="653" y="370.7" width="16" height="10.5" fill="#5bb9ec" stroke="none"/>
 <path d="M652.5,362 V380 Q652.5,381.3 654,381.3 H667.5 Q669,381.3 669,380 V362" stroke-width="1.3"/>
 <path d="M657.3,378 V348 Q660.4,343 663.5,348 V378" fill="#fff" stroke-width="1.3"/>
 <rect x="658.3" y="360.8" width="4.4" height="17" fill="#5bb9ec" stroke="none"/>
 <path d="M653.3,349.7 H655.5 V377" stroke-width="1.8"/>
 <!-- gas collection 3 -->
 <rect x="661.5" y="409" width="27.5" height="10" fill="#5bb9ec" stroke="none"/>
 <path d="M661.3,409 V419.2 H689.3 V409" stroke-width="1.3"/>
 <path d="M669.8,414 V386 H678.8 V414" fill="#fff" stroke-width="1.6"/>
 <rect x="670.5" y="396.8" width="7.5" height="17" fill="#5bb9ec" stroke="none"/>
 <path d="M668.3,385.5 H680.3" stroke-width="1.6"/>
 <path d="M667,414.5 H682 M669,414.5 V418 M680,414.5 V418" stroke-width="1.5"/>
 <path d="M652.5,405.7 H663 L670,418" stroke-width="1.5"/>
 <!-- filtration -->
 <rect x="656" y="424.3" width="3.5" height="7" fill="#808080" stroke="#000" stroke-width="1"/>
 <rect x="667.5" y="424.3" width="3.5" height="7" fill="#808080" stroke="#000" stroke-width="1"/>
 <path d="M659.5,427 H667.5" stroke="#5bb9ec" stroke-width="2.5"/>
 <path d="M659.5,431 H667.5" stroke-width="1.3"/>
 <path d="M661,431.5 V442.3 M666.4,431.5 V442.3" stroke-width="1.8"/>
 <path d="M662,436 H665.5" stroke="#a06020" stroke-width="2"/>
 <path d="M661,442.3 L653,459 H674.4 L666.4,442.3" stroke-width="1.2"/>
 <path d="M654,458.5 H673.5" stroke="#5bb9ec" stroke-width="2"/>
 <!-- air composition -->
 <rect x="652.8" y="476.4" width="36.5" height="3" fill="#fff" stroke-width="1.3"/>
 <path d="M655,477.9 H664 M676,477.9 H687" stroke="#808080" stroke-width="1"/>
 <path d="M670,479.5 V486" stroke-width="1.5"/>
 <path d="M667,489 L670,485.5 L673.5,489 Z" fill="#000" stroke="none"/>
 <!-- partial -->
 <rect x="653.5" y="510.8" width="29" height="3.6" rx="1.8" fill="#fff" stroke-width="1.3"/>
 <path d="M659,512.6 H662 M671,512.6 H675" stroke="#a06020" stroke-width="2"/>
 <path d="M682,512.6 Q686,512.6 686,516 V520" stroke-width="2"/>
 <rect x="683" y="517" width="5.5" height="9" fill="#909090" stroke="#000" stroke-width="0.8"/>
</svg>


<!-- canvas drawing -->
<svg class="a" style="left:0;top:0;" width="800" height="572" fill="none">
 <g transform="scale(1.33333)">
  <g transform="translate(68.75,260.8) rotate(-20.153)" stroke="#222" stroke-width="0.9">
   <rect x="124" y="-17" width="3.4" height="11" fill="#5bb9ec"/>
   <rect x="19.3" y="6" width="3.4" height="11" fill="#5bb9ec"/>
   <rect x="12.4" y="-7.3" width="125.8" height="14.6" rx="6.5" fill="#5bb9ec"/>
   <rect x="0" y="-1.75" width="143.5" height="3.5" fill="#fff" stroke="none"/>
   <path d="M0,-1.75 H141 M0,1.75 H141"/>
   <path d="M137.7,-1.9 Q141.5,-2 143,-2.6 Q144.5,-4.6 146.5,-4.4 H154.5 M137.7,1.9 Q141.5,1.8 142.5,1.6 Q143.8,4.3 146,4.3 H155" fill="#fff"/>
   <rect x="154" y="-4.6" width="13" height="2.6" fill="#f8bc45" stroke-width="0.7"/>
   <rect x="155" y="2.1" width="12.5" height="2.6" fill="#f8bc45" stroke-width="0.7"/>
   <rect x="148" y="-1.7" width="33.5" height="3.4" fill="#fff" stroke="none"/>
   <path d="M149.5,-1.7 H181.5 M150.5,1.7 H181.5"/>
  </g>
  <path d="M238.9,200.4 V208 Q238.9,212.56 234.81,214.06 A31.7,31.7 0 1 0 263.59,214.06 Q259.5,212.56 259.5,208 V193.6 H238.9 Z" fill="#fff" stroke="none"/>
  <path d="M217.59,244.7 H280.81 A31.7,31.7 0 0 1 217.59,244.7 Z" fill="#5bb9ec" stroke="none"/>
  <path d="M238.9,193.6 V197.2 M238.9,200.4 V208 Q238.9,212.56 234.81,214.06 A31.7,31.7 0 1 0 263.59,214.06 Q259.5,212.56 259.5,208 V193.6" stroke="#333" stroke-width="0.9"/>
  <path d="M235.5,173.3 L238.6,177 M262.7,173.3 L259.6,177" stroke="#333" stroke-width="0.8"/>
  <rect x="238.3" y="175.6" width="21.3" height="18" fill="#fcbc5c" stroke="#555" stroke-width="0.7"/>
  <path d="M248.4,217 V99.8 L250.45,96.1 L252.5,99.8 V217 Z" fill="#fff" stroke="#383838" stroke-width="0.8"/>
  <rect x="249.55" y="120.8" width="1.9" height="80" fill="#ff4a10"/>
  <path d="M247.6,199.5 Q247.6,196.6 250.3,196.6 Q253,196.6 253,199.5 V213.5 L250.3,217.4 L247.6,213.5 Z" fill="#ff4a10" stroke="#5a2000" stroke-width="0.8"/>
      <path d="M201,274 L202.45,276.2 L203.90,274 L205.35,276.2 L206.80,274 L208.25,276.2 L209.70,274 L211.15,276.2 L212.60,274 L214.05,276.2 L215.50,274 L216.95,276.2 L218.40,274 L219.85,276.2 L221.30,274 L222.75,276.2 L224.20,274 L225.65,276.2 L227.10,274 L228.55,276.2 L230.00,274 L231.45,276.2 L232.90,274 L234.35,276.2 L235.80,274 L237.25,276.2 L238.70,274 L240.15,276.2 L241.60,274 L243.05,276.2 L244.50,274 L245.95,276.2 L247.40,274 L248.85,276.2 L250.30,274 L251.75,276.2 L253.20,274 L254.65,276.2 L256.10,274 L257.55,276.2 L259.00,274 L260.45,276.2 L261.90,274 L263.35,276.2 L264.80,274 L266.25,276.2 L267.70,274 L269.15,276.2 L270.60,274 L272.05,276.2 L273.50,274 L274.95,276.2 L276.40,274 L277.85,276.2 L279.30,274 L280.75,276.2 L282.20,274 L283.65,276.2 L285.10,274 L286.55,276.2 L288.00,274 L289.45,276.2 L290.90,274 L292.35,276.2 L293.80,274 L295.25,276.2 L296.70,274 L298.15,276.2" stroke="#333" stroke-width="0.75"/>
  <path d="M199,274 L202,276 L199,278" stroke="#333" stroke-width="0.7"/>
  <path d="M201,277.1 H298" stroke="#333" stroke-width="0.8" stroke-dasharray="1.6,1.3"/>
  <path d="M205.3,277.7 H293.2 V281 H206.5 L205.3,280 Z" fill="#fff" stroke="#222" stroke-width="0.9"/>
  <path d="M215.6,281 L199.6,373.5 H202.4 L218.4,281 Z" fill="#fff" stroke="#333" stroke-width="0.8"/>
  <path d="M280.8,281 L292.8,373.5 H295.6 L283.6,281 Z" fill="#fff" stroke="#333" stroke-width="0.8"/>
  <path d="M247,300.8 Q244.6,296 245.5,291 Q246.5,285 248.5,282 Q250.6,279.6 252.7,282 Q254.8,285 255.8,291 Q256.6,296 254.4,300.8 Z" fill="#c4f0f4" stroke="#333" stroke-width="0.8"/>
  <path d="M248.4,301 L248.6,293 Q249.8,288.5 250.8,287 Q252,288.5 253.2,293 L253.2,301 Z" fill="#f0f0a8" stroke="none"/>
  <rect x="247.4" y="301" width="7" height="50" fill="#fff" stroke="#444" stroke-width="0.9"/>
  <rect x="246.8" y="351.2" width="8.1" height="13.3" fill="#fff" stroke="#333" stroke-width="0.9"/>
  <circle cx="250.8" cy="358" r="2.5" fill="#888" stroke="#333" stroke-width="0.8"/>
  <path d="M220.5,373.7 Q220.5,366 229,364.6 H272.5 Q281,366 281,373.7 Z" fill="#dcdcdc" stroke="#333" stroke-width="0.9"/>
 </g>
</svg>

 <!-- right panel frame & list toolbar -->
 <div class="a" style="left:794px;top:527px;width:1px;height:20px;background:#808080;"></div>
 <div class="a" style="left:647px;top:546px;width:149px;height:1px;background:#808080;"></div>
 <svg class="a" style="left:0;top:0" width="800" height="572" fill="none">
  <g transform="translate(658,532)">
   <path d="M5.5,0.5 L9.5,5.5 H7.5 L10,9 H7 V11 H4 V9 H1 L3.5,5.5 H1.5 Z" stroke="#fff" transform="translate(1,1)"/>
   <path d="M5.5,0.5 L9.5,5.5 H7.5 L10,9 H7 V11 H4 V9 H1 L3.5,5.5 H1.5 Z" stroke="#808080"/>
  </g>
  <g transform="translate(681,532)">
   <path d="M4,0.5 H8 V3.5 H11.5 L6,11.5 L0.5,3.5 H4 Z" fill="#00e0e0" stroke="#000" stroke-width="1.1"/>
  </g>
  <path d="M707,533.5 L716,542.5 M716,533.5 L707,542.5" stroke="#e00000" stroke-width="2.2"/>
  <path d="M729.5,532.5 H735.5 L739.5,536.5 V543.5 H729.5 Z" fill="#fff" stroke="#000" stroke-width="1.1"/>
  <path d="M735.5,532.5 V536.5 H739.5" stroke="#000" stroke-width="1"/>
  <g stroke="#000" stroke-width="1.1" fill="#fff">
   <rect x="753" y="531.5" width="4.5" height="3.5" rx="1.5"/>
   <rect x="753" y="536.5" width="4.5" height="3.5" rx="1.5"/>
   <rect x="753" y="541.5" width="4.5" height="3.5" rx="1.5"/>
  </g>
  <path d="M758,543 H765 V537.5 H761" stroke="#e00000" stroke-width="1.4"/>
  <path d="M760,535 L762.5,537.5 L760,540 Z" fill="#e00000"/>
  <!-- size grip -->
  <path d="M794,556 L783,567 M794,560 L787,567 M794,564 L791,567" stroke="#808080" stroke-width="1.2"/>
  <path d="M794,557.3 L784.3,567 M794,561.3 L788.3,567 M794,565.3 L792.3,567" stroke="#fff" stroke-width="0.9"/>
 </svg>
 <!-- left toolbox -->
 <div class="a pr" style="left:5px;top:98px;width:25px;height:24px;"></div>
 <svg class="a" style="left:0;top:0" width="32" height="450" fill="none" stroke="#000">
  <circle cx="15" cy="82.7" r="4.8" fill="#fff" stroke-width="1.5"/>
  <path d="M19,86.8 L25.5,93" stroke-width="2.6"/>
  <path d="M18.6,86.4 L20.3,88.1" stroke="#e0d000" stroke-width="2"/>
  <path d="M11.5,104 L14.5,114.5 L16.8,111.5 L23.5,117.5 L25.5,115.5 L19,109.5 L22,107.5 Z" fill="#ff0000" stroke="#800000" stroke-width="1"/>
  <path d="M10.8,141 L26.3,127" stroke-width="1.4"/>
  <circle cx="17.7" cy="134.5" r="2" fill="#c0c0c0" stroke-width="1.2"/>
  <path d="M21.5,141.5 L27,137 L27,141.5 Z" fill="#000" stroke="none"/>
  <rect x="10.5" y="151" width="15.5" height="14.5" rx="1.5" stroke="#202020" stroke-width="1.6"/>
  <circle cx="18.1" cy="182.9" r="7.8" stroke="#202020" stroke-width="1.6"/>
  <path d="M16,200.3 H24.5 L21,207.5 L25.8,211.3 L24.5,214.4 H10.6 V207 Z" stroke="#202020" stroke-width="1.5" stroke-linejoin="round"/>
  <path d="M10.3,230.8 L16.3,225.8 H21.8 L19.3,230 Q26.5,232.5 25.2,236.2 Q23.5,238.3 17.8,238" stroke="#202020" stroke-width="1.5" stroke-linejoin="round"/>
  <path d="M10.8,263 L25.3,249.5" stroke="#202020" stroke-width="1.4"/>
  <path d="M10.8,287 L23,276" stroke="#202020" stroke-width="1.4"/>
  <path d="M20,275.3 L25.6,273.6 L24.3,279.2 Z" fill="#000" stroke="none"/>
  <path d="M10.3,310.5 Q24.5,309.5 25.3,298" stroke="#202020" stroke-width="1.5"/>
  <path d="M10,329.5 Q12.2,321.5 13.8,323 Q16,325 18.5,336 Q19.5,339 21,335.5 Q22.5,331 23.6,329.5" stroke="#202020" stroke-width="1.5"/>
  <path d="M10,385 V377.5 Q10,369.5 18,369.5 H26.3 M13.6,385 V378.5 Q13.6,373 19,373 H26.3" stroke="#303030" stroke-width="1.5"/>
  <path d="M10,399.5 H26.3 M10,404.5 H26.3" stroke="#303030" stroke-width="1.6"/>
  <rect x="10.8" y="420" width="13" height="13" fill="#000" stroke="none"/>
  <g fill="#fff" stroke="none">
   <rect x="12.3" y="421.5" width="2.2" height="2.2"/><rect x="16.3" y="421.5" width="2.2" height="2.2"/><rect x="20.3" y="421.5" width="2.2" height="2.2"/>
   <rect x="12.3" y="425.5" width="2.2" height="2.2"/><rect x="16.3" y="425.5" width="2.2" height="2.2"/><rect x="20.3" y="425.5" width="2.2" height="2.2"/>
   <rect x="12.3" y="429.5" width="2.2" height="2.2"/><rect x="16.3" y="429.5" width="2.2" height="2.2"/><rect x="20.3" y="429.5" width="2.2" height="2.2"/>
  </g>
 </svg>
 <div class="a" style="left:12px;top:346.5px;width:12px;text-align:center;font-family:'Liberation Serif',serif;font-weight:bold;font-size:14px;line-height:16px;color:#000080;-webkit-text-stroke:0.4px #000080;">T</div>
 <!-- status bar -->
 <div class="a th" style="left:4px;top:549px;width:100px;height:19px;"></div>
 <div class="a" style="left:6px;top:552px;line-height:13px;font-size:11px;letter-spacing:-0.2px;">x = 8.20 y=0.43</div>
 <div class="a th" style="left:106px;top:549px;width:690px;height:19px;"></div>
</div>
</body></html>
